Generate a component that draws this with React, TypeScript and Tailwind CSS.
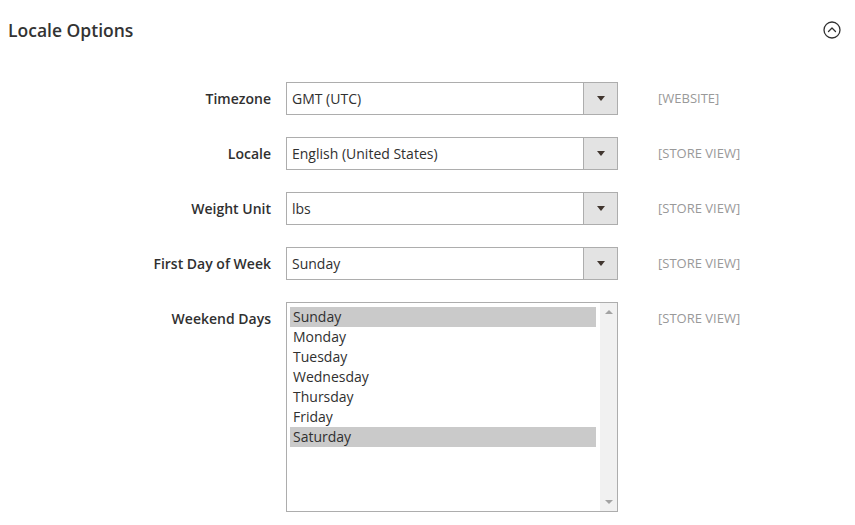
import React from "react";

const font = { fontFamily: "'Open Sans', 'Noto Sans', sans-serif" };

const selects = [
  { label: "Timezone", value: "GMT (UTC)", scope: "[WEBSITE]" },
  { label: "Locale", value: "English (United States)", scope: "[STORE VIEW]" },
  { label: "Weight Unit", value: "lbs", scope: "[STORE VIEW]" },
  { label: "First Day of Week", value: "Sunday", scope: "[STORE VIEW]" },
];

const days = ["Sunday", "Monday", "Tuesday", "Wednesday", "Thursday", "Friday", "Saturday"];
const picked = ["Sunday", "Saturday"];

function Select({ value }: { value: string }) {
  return (
    <div className="flex h-[33px] w-[332px] border border-[#adadad] bg-white">
      <div className="flex flex-1 items-center pl-[5px] text-[14px] text-[#303030]">{value}</div>
      <div className="flex w-[34px] items-center justify-center border-l border-[#adadad] bg-[#e3e3e3]">
        <div className="h-0 w-0 border-x-[4px] border-t-[5px] border-x-transparent border-t-[#41362f]" />
      </div>
    </div>
  );
}

function MultiSelect() {
  return (
    <div className="flex h-[210px] w-[332px] border border-[#adadad] bg-white">
      <div className="flex-1 py-[4px] pl-[3px] pr-[4px]">
        {days.map((d) => (
          <div
            key={d}
            className={`h-[20px] pl-[3px] text-[14px] leading-[20px] text-[#303030] ${
              picked.includes(d) ? "bg-[#cacaca]" : ""
            }`}
          >
            {d}
          </div>
        ))}
      </div>
      <div className="flex w-[17px] flex-col items-center justify-between bg-[#f1f1f1] py-[7px]">
        <div className="h-0 w-0 border-x-[4px] border-b-[4px] border-x-transparent border-b-[#a3a3a3]" />
        <div className="h-0 w-0 border-x-[4px] border-t-[4px] border-x-transparent border-t-[#a3a3a3]" />
      </div>
    </div>
  );
}

function Row({ label, scope, children }: { label: string; scope: string; children: React.ReactNode }) {
  return (
    <div className="flex items-start">
      <div className="w-[271px] text-right text-[14px] font-semibold leading-[33px] text-[#303030]">{label}</div>
      <div className="ml-[15px]">{children}</div>
      <div className="ml-[40px] text-[13px] leading-[33px] text-[#999999]">{scope}</div>
    </div>
  );
}

export default function App() {
  return (
    <div className="h-[525px] w-[855px] overflow-hidden bg-white" style={font}>
      <div className="flex items-center justify-between pl-[8px] pr-[14px] pt-[17px]">
        <h2 className="text-[17.5px] font-semibold leading-[26px] text-[#333333]">Locale Options</h2>
        <svg width="18" height="18" viewBox="0 0 18 18" fill="none" stroke="#303030" strokeWidth="1.3">
          <circle cx="9" cy="9" r="8" />
          <path d="M5.5 10.5 L9 7 L12.5 10.5" strokeLinecap="round" strokeLinejoin="round" />
        </svg>
      </div>
      <div className="mt-[39px] flex flex-col gap-[22px]">
        {selects.map((s) => (
          <Row key={s.label} label={s.label} scope={s.scope}>
            <Select value={s.value} />
          </Row>
        ))}
        <Row label="Weekend Days" scope="[STORE VIEW]">
          <MultiSelect />
        </Row>
      </div>
    </div>
  );
}
